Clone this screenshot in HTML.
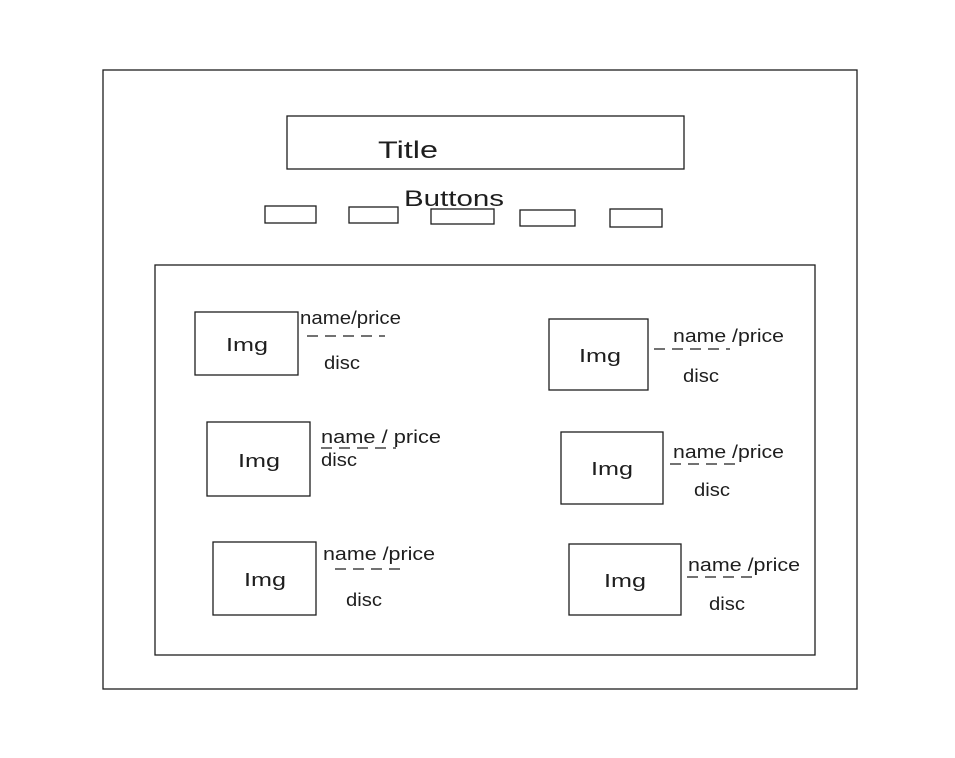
<!DOCTYPE html>
<html><head><meta charset="utf-8"><style>
html,body{margin:0;padding:0;background:#fff;}
svg{display:block}
text{font-family:"Liberation Sans",sans-serif;fill:#1e1e1e;}
</style></head><body>
<svg width="955" height="758" viewBox="0 0 955 758" xmlns="http://www.w3.org/2000/svg">
<g fill="none" stroke="#1e1e1e" stroke-width="1.3">
<rect x="103" y="70" width="754" height="619"/>
<rect x="287" y="116" width="397" height="53"/>
<rect x="265" y="206" width="51" height="17"/>
<rect x="349" y="207" width="49" height="16"/>
<rect x="431" y="209" width="63" height="15"/>
<rect x="520" y="210" width="55" height="16"/>
<rect x="610" y="209" width="52" height="18"/>
<rect x="155" y="265" width="660" height="390"/>
<rect x="195" y="312" width="103" height="63"/>
<rect x="549" y="319" width="99" height="71"/>
<rect x="207" y="422" width="103" height="74"/>
<rect x="561" y="432" width="102" height="72"/>
<rect x="213" y="542" width="103" height="73"/>
<rect x="569" y="544" width="112" height="71"/>
<g stroke-dasharray="11,7">
<line x1="307" y1="336" x2="385" y2="336"/>
<line x1="654" y1="349" x2="730" y2="349"/>
<line x1="321" y1="448" x2="396" y2="448"/>
<line x1="670" y1="464" x2="741" y2="464"/>
<line x1="335" y1="569" x2="405" y2="569"/>
<line x1="687" y1="577" x2="757" y2="577"/>
</g>
</g>
<text x="378" y="158" font-size="24" textLength="60" lengthAdjust="spacingAndGlyphs">Title</text>
<text x="404" y="206" font-size="22" textLength="100" lengthAdjust="spacingAndGlyphs">Buttons</text>
<g font-size="18">
<text x="226" y="351" textLength="42" lengthAdjust="spacingAndGlyphs">Img</text>
<text x="579" y="362" textLength="42" lengthAdjust="spacingAndGlyphs">Img</text>
<text x="238" y="467" textLength="42" lengthAdjust="spacingAndGlyphs">Img</text>
<text x="591" y="475" textLength="42" lengthAdjust="spacingAndGlyphs">Img</text>
<text x="244" y="586" textLength="42" lengthAdjust="spacingAndGlyphs">Img</text>
<text x="604" y="587" textLength="42" lengthAdjust="spacingAndGlyphs">Img</text>
</g>
<g font-size="18">
<text x="300" y="324" textLength="101" lengthAdjust="spacingAndGlyphs">name/price</text>
<text x="324" y="369" textLength="36" lengthAdjust="spacingAndGlyphs">disc</text>
<text x="673" y="342" textLength="111" lengthAdjust="spacingAndGlyphs">name /price</text>
<text x="683" y="382" textLength="36" lengthAdjust="spacingAndGlyphs">disc</text>
<text x="321" y="443" textLength="120" lengthAdjust="spacingAndGlyphs">name / price</text>
<text x="321" y="466" textLength="36" lengthAdjust="spacingAndGlyphs">disc</text>
<text x="673" y="458" textLength="111" lengthAdjust="spacingAndGlyphs">name /price</text>
<text x="694" y="496" textLength="36" lengthAdjust="spacingAndGlyphs">disc</text>
<text x="323" y="560" textLength="112" lengthAdjust="spacingAndGlyphs">name /price</text>
<text x="346" y="606" textLength="36" lengthAdjust="spacingAndGlyphs">disc</text>
<text x="688" y="571" textLength="112" lengthAdjust="spacingAndGlyphs">name /price</text>
<text x="709" y="610" textLength="36" lengthAdjust="spacingAndGlyphs">disc</text>
</g>
</svg>
</body></html>
